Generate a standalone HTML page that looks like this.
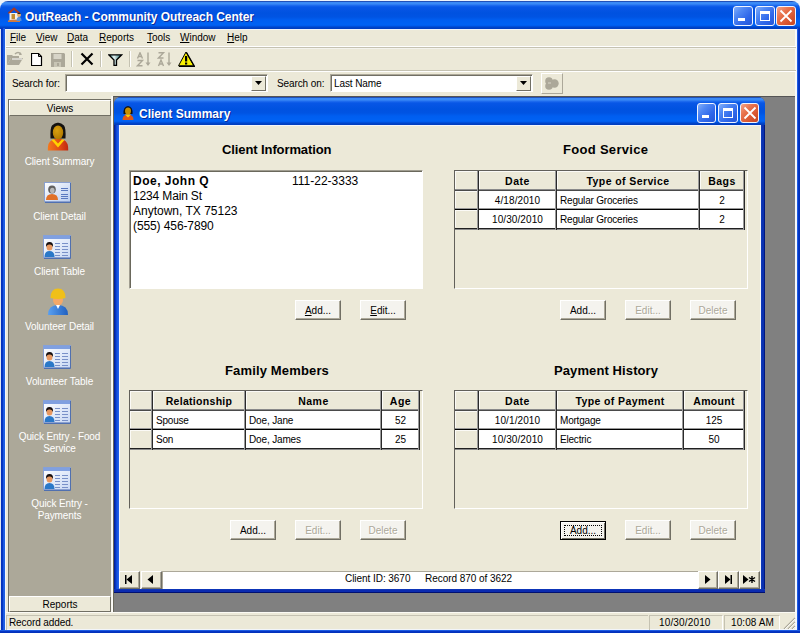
<!DOCTYPE html>
<html><head><meta charset="utf-8">
<style>
*{box-sizing:border-box}
html,body{margin:0;padding:0}
body{width:800px;height:633px;overflow:hidden;position:relative;background:#ece9d8;font-family:"Liberation Sans",sans-serif;font-size:11px;color:#000}
.a{position:absolute}
.t{position:absolute;white-space:pre;line-height:1}
.u{text-decoration:underline}
.xptitle{background:linear-gradient(#2050b8 0px,#2050b8 1px,#3a8af6 1px,#3a8af6 3px,#2370f0 4px,#0856e6 6px,#0052e0 12px,#0054e3 16px,#005ef0 19px,#0062f4 24px,#0058e8 25px,#0046cc 26px,#003cbc 28px)}
.tbtn{position:absolute;top:5px;width:20px;height:20px;border:1px solid #f0f4ff;border-radius:3px;background:linear-gradient(135deg,#82aefa 0%,#5088f4 30%,#3068ea 65%,#2456d8 100%)}
.tbtn.cl{background:linear-gradient(135deg,#f4a488 0%,#e8724c 35%,#d85630 70%,#c44620 100%)}
.btn{position:absolute;width:46px;height:20px;background:#f4f3ee;border:1px solid;border-color:#fff #716f64 #716f64 #fff;box-shadow:inset -1px -1px 0 #aca899;text-align:center;line-height:19px;font-size:10px;letter-spacing:0}
.dis{color:#aca899;text-shadow:1px 1px 0 #fff}
.sunk{position:absolute;border:1px solid;border-color:#aca899 #fff #fff #aca899}
.plbl{position:absolute;left:9px;width:101px;text-align:center;color:#fff;white-space:pre;line-height:12px;font-size:10px;letter-spacing:-0.1px}
.menu{position:absolute;top:32.5px;white-space:pre;line-height:10px;font-size:10px;letter-spacing:0}
</style></head><body>
<div class="a" style="left:0;top:0;width:800px;height:30px;background:#eef3fa"></div>
<div class="a xptitle" style="left:0;top:1px;width:800px;height:28px;border-radius:8px 8px 0 0"></div>
<svg class="a" style="left:7px;top:7px" width="16" height="16" viewBox="0 0 16 16">
<path d="M1.5 6.5L7 1.5L12.5 6.5" fill="none" stroke="#a83a20" stroke-width="2"/>
<rect x="2.5" y="6" width="9" height="8" fill="#f4f0ea"/>
<rect x="4.5" y="7" width="3.5" height="5" fill="#c08a30"/>
<path d="M1 13.5Q7 11.5 13 13.5L13 15L1 15Z" fill="#d07a40"/>
<circle cx="12" cy="8" r="2" fill="#e8b070"/><path d="M10 7Q12 4.5 14 7" fill="#222"/>
<path d="M9.5 14Q9.5 10 12 10Q14.5 10 14.5 14Z" fill="#5a90d8"/>
</svg>
<div class="t" style="left:25px;top:11px;font-weight:bold;font-size:12px;letter-spacing:-0.05px;color:#fff;text-shadow:1px 1px 0 #0a2a9a">OutReach - Community Outreach Center</div>
<div class="tbtn" style="left:733px;top:6px;width:20px"><div class="a" style="left:4px;top:11px;width:7px;height:3px;background:#fff"></div></div>
<div class="tbtn" style="left:755px;top:6px;width:20px"><div class="a" style="left:4px;top:4px;width:10px;height:10px;border:1px solid #fff;border-top-width:3px"></div></div>
<div class="tbtn cl" style="left:776px;top:6px;width:20px"><svg class="a" style="left:0;top:0" width="18" height="18"><path d="M3.5 3.5L14.5 14.5M14.5 3.5L3.5 14.5" stroke="#fff" stroke-width="1.8"/></svg></div>
<div class="a" style="left:0;top:29px;width:1px;height:604px;background:#dfe6f2"></div>
<div class="a" style="left:1px;top:28px;width:4px;height:602px;background:linear-gradient(90deg,#0030b8 0,#0838c8 2px,#1a58e0 2px,#2060e4 4px)"></div>
<div class="a" style="left:5px;top:29px;width:1px;height:601px;background:#f2f5fa"></div>
<div class="a" style="left:797px;top:28px;width:3px;height:605px;background:linear-gradient(90deg,#2060e4 0,#1a58e0 1px,#0838c8 1px,#0030b8 3px)"></div>
<div class="a" style="left:795px;top:29px;width:2px;height:601px;background:#f6f8fb"></div>
<div class="a" style="left:0;top:630px;width:800px;height:3px;background:linear-gradient(#2060e4 0,#1a58e0 1px,#0838c8 1px,#0030b8 3px)"></div>
<div class="a" style="left:5px;top:629px;width:792px;height:1px;background:#f2f5fa"></div>
<div class="a" style="left:5px;top:29px;width:792px;height:1px;background:#f2f5fa"></div>
<div class="menu" style="left:10px"><span class="u">F</span>ile</div>
<div class="menu" style="left:36px"><span class="u">V</span>iew</div>
<div class="menu" style="left:67px"><span class="u">D</span>ata</div>
<div class="menu" style="left:99px"><span class="u">R</span>eports</div>
<div class="menu" style="left:147px"><span class="u">T</span>ools</div>
<div class="menu" style="left:180px"><span class="u">W</span>indow</div>
<div class="menu" style="left:227px"><span class="u">H</span>elp</div>
<div class="a" style="left:6px;top:46px;width:790px;height:1px;background:#fff"></div>
<div class="a" style="left:6px;top:47px;width:790px;height:1px;background:#c5c2b2"></div>
<div class="a" style="left:6px;top:48px;width:790px;height:1px;background:#f4f3ec"></div>
<svg class="a" style="left:6px;top:51px" width="18" height="16" viewBox="0 0 18 16">
<path d="M1 4h5l1 1h6v2H5L1 14Z" fill="#aca899"/><path d="M5 7h12l-4 7H1Z" fill="#aca899"/>
<path d="M9 3Q12 0 15 3" fill="none" stroke="#aca899" stroke-width="1.5"/><path d="M14 1l2 3h-3z" fill="#aca899"/>
<path d="M6 8h10" stroke="#fff" stroke-width="1"/>
</svg>
<svg class="a" style="left:31px;top:53px" width="12" height="13" viewBox="0 0 12 13">
<path d="M0.5 0.5H7.5L10.5 3.5V12.5H0.5Z" fill="#fff" stroke="#000" stroke-width="1.2"/><path d="M7.5 0.5V3.5H10.5" fill="none" stroke="#000"/>
</svg>
<svg class="a" style="left:51px;top:53px" width="14" height="14" viewBox="0 0 14 14">
<path d="M0 0H13L14 1V14H0Z" fill="#aca899"/><rect x="2.5" y="1" width="8" height="5" fill="#d8d5c8"/><rect x="3" y="9" width="7" height="5" fill="#c8c5b5"/><rect x="6" y="10" width="2" height="3" fill="#aca899"/>
</svg>
<div class="a" style="left:71px;top:51px;width:1px;height:16px;background:#c5c2b2;box-shadow:1px 0 0 #fff"></div>
<svg class="a" style="left:80px;top:52px" width="14" height="14" viewBox="0 0 14 14">
<path d="M1.5 1.5L12.5 12.5M12.5 1.5L1.5 12.5" stroke="#000" stroke-width="2.2"/>
</svg>
<div class="a" style="left:100px;top:51px;width:1px;height:16px;background:#c5c2b2;box-shadow:1px 0 0 #fff"></div>
<svg class="a" style="left:108px;top:54px" width="15" height="12" viewBox="0 0 15 12">
<defs><linearGradient id="fg" x1="0" x2="1"><stop offset="0" stop-color="#208080"/><stop offset="0.4" stop-color="#e8f4f4"/><stop offset="1" stop-color="#106060"/></linearGradient></defs>
<path d="M0.8 0.8H13.7L8.5 6V11.3H6V6Z" fill="url(#fg)" stroke="#000" stroke-width="1.3"/>
</svg>
<div class="a" style="left:129px;top:51px;width:1px;height:16px;background:#c5c2b2;box-shadow:1px 0 0 #fff"></div>
<svg class="a" style="left:136px;top:52px" width="16" height="15" viewBox="0 0 16 15">
<g fill="none" stroke="#aca899" stroke-width="1.4"><path d="M1.5 6.5L4 0.8L6.5 6.5M2.5 4.5H5.5"/><path d="M1.5 8.5H6.5L1.5 13.8H6.5"/><path d="M12 0.5V13"/></g>
<path d="M9.5 10.5H14.5L12 14Z" fill="#aca899"/>
</svg>
<svg class="a" style="left:157px;top:52px" width="16" height="15" viewBox="0 0 16 15">
<g fill="none" stroke="#aca899" stroke-width="1.4"><path d="M1.5 0.8H6.5L1.5 6H6.5"/><path d="M1.5 14L4 8L6.5 14M2.5 12H5.5"/><path d="M12 0.5V13"/></g>
<path d="M9.5 10.5H14.5L12 14Z" fill="#aca899"/>
</svg>
<svg class="a" style="left:178px;top:51px" width="17" height="16" viewBox="0 0 17 16">
<path d="M8 1L15.8 14.8H0.5Z" fill="#f8f000" stroke="#000" stroke-width="1"/><path d="M8.5 1.5L16.5 15.5H1" fill="none" stroke="#000" stroke-width="1.3"/>
<rect x="7" y="5" width="2.2" height="5.5" fill="#000"/><rect x="7" y="11.5" width="2.2" height="2" fill="#000"/>
</svg>
<div class="a" style="left:6px;top:70px;width:790px;height:1px;background:#c5c2b2"></div>
<div class="a" style="left:6px;top:71px;width:790px;height:1px;background:#fff"></div>
<div class="t" style="left:12px;top:78.5px;font-size:10px;letter-spacing:-0.1px">Search for:</div>
<div class="a" style="left:65px;top:74px;width:203px;height:18px;background:#fff;border:1px solid;border-color:#aca899 #fff #fff #aca899;box-shadow:inset 1px 1px 0 #716f64"></div>
<div class="a" style="left:251px;top:76px;width:15px;height:15px;background:#ece9d8;border:1px solid;border-color:#fff #716f64 #716f64 #fff"></div>
<svg class="a" style="left:255px;top:81px" width="8" height="5"><path d="M0 0H7L3.5 4Z" fill="#000"/></svg>
<div class="t" style="left:277px;top:78.5px;font-size:10px;letter-spacing:-0.1px">Search on:</div>
<div class="a" style="left:330px;top:74px;width:203px;height:18px;background:#fff;border:1px solid;border-color:#aca899 #fff #fff #aca899;box-shadow:inset 1px 1px 0 #716f64"></div>
<div class="a" style="left:516px;top:76px;width:15px;height:15px;background:#ece9d8;border:1px solid;border-color:#fff #716f64 #716f64 #fff"></div>
<svg class="a" style="left:520px;top:81px" width="8" height="5"><path d="M0 0H7L3.5 4Z" fill="#000"/></svg>
<div class="t" style="left:334px;top:78.5px;font-size:10px;letter-spacing:-0.1px">Last Name</div>
<div class="a" style="left:541px;top:73px;width:22px;height:21px;border:1px solid;border-color:#fff #aca899 #aca899 #fff"></div>
<svg class="a" style="left:544px;top:76px" width="16" height="15" viewBox="0 0 16 15">
<circle cx="5" cy="5" r="3.8" fill="#aca899"/><circle cx="5" cy="10" r="3.8" fill="#aca899"/><circle cx="10.5" cy="7.5" r="4.2" fill="#aca899"/><path d="M4 7h3" stroke="#d8d5c8"/>
</svg>
<div class="a" style="left:113px;top:96px;width:682px;height:516px;background:#808080;border-left:1px solid #6a685c;border-top:1px solid #555"></div>
<div class="a" style="left:111px;top:96px;width:2px;height:517px;background:linear-gradient(90deg,#f4f2ea,#fff)"></div>
<div class="a" style="left:6px;top:612px;width:790px;height:1px;background:#fbfaf4"></div>
<div class="a" style="left:8px;top:99px;width:103px;height:513px;background:#aca899;border-left:1px solid #716f64;border-top:1px solid #716f64"></div>
<div class="a" style="left:9px;top:100px;width:102px;height:16px;background:#ece9d8;border:1px solid;border-color:#fff #716f64 #716f64 #fff"></div>
<div class="t" style="left:9px;top:103.5px;width:102px;text-align:center;font-size:10px">Views</div>
<div class="a" style="left:9px;top:596px;width:102px;height:16px;background:#ece9d8;border:1px solid;border-color:#fff #716f64 #716f64 #fff"></div>
<div class="t" style="left:9px;top:599.5px;width:102px;text-align:center;font-size:10px">Reports</div>
<svg class="a" style="left:47px;top:121px" width="22" height="30" viewBox="0 0 22 30">
<defs><linearGradient id="bodyo" x1="0" x2="1"><stop offset="0" stop-color="#f47a1c"/><stop offset="0.6" stop-color="#e04a14"/><stop offset="1" stop-color="#c02810"/></linearGradient>
<radialGradient id="facew" cx="0.4" cy="0.35" r="0.7"><stop offset="0" stop-color="#d8a010"/><stop offset="1" stop-color="#b07800"/></radialGradient></defs>
<path d="M3.5 17.5Q3 7 5 4.5Q8 1.5 11 1.8Q14 1.5 17 4.5Q19 7 18.5 17.5Z" fill="#141210"/>
<path d="M0.8 29.5Q0.5 21 5 19Q8 17.8 11 17.8Q14 17.8 17 19Q21.5 21 21.2 29.5Z" fill="url(#bodyo)"/>
<ellipse cx="11" cy="11.5" rx="5.2" ry="7" fill="url(#facew)"/>
<path d="M4.5 19L11 26.5L17.5 19L15 18.2L11 22.5L7 18.2Z" fill="#ffd200"/>
</svg><div class="plbl" style="top:155.5px">Client Summary</div>
<svg class="a" style="left:44px;top:182px" width="28" height="21" viewBox="0 0 28 21">
<defs><linearGradient id="cardg" x1="0" y1="0" x2="1" y2="1"><stop offset="0" stop-color="#ffffff"/><stop offset="1" stop-color="#b8ccf0"/></linearGradient></defs>
<rect x="0.5" y="0.5" width="26" height="19" fill="url(#cardg)" stroke="#8aa0d0"/>
<path d="M26.5 1V20.5H1" fill="none" stroke="#5070b0"/>
<ellipse cx="8" cy="7.5" rx="3.8" ry="4" fill="#606060"/><ellipse cx="8.3" cy="8.5" rx="2.3" ry="2.7" fill="#b8b8b8"/>
<path d="M2 18Q2 12 8 12Q14 12 14 18Z" fill="#e07028"/>
<g stroke="#5a78c0" stroke-width="1"><path d="M17 6.5H24M17 8.5H24M17 12.5H24M17 14.5H24M17 16.5H24"/></g>
</svg><div class="plbl" style="top:210.5px">Client Detail</div>
<svg class="a" style="left:43px;top:235px" width="29" height="24" viewBox="0 0 29 24">
<defs><linearGradient id="cardt" x1="0" y1="0" x2="1" y2="1"><stop offset="0" stop-color="#ffffff"/><stop offset="1" stop-color="#c8d8f4"/></linearGradient></defs>
<rect x="0.5" y="0.5" width="27" height="22" fill="url(#cardt)" stroke="#8aa0d0"/>
<rect x="0.5" y="0.5" width="27" height="3.5" fill="#80a0e0"/>
<path d="M27.5 1V23.5H1" fill="none" stroke="#5070b0"/>
<path d="M1.5 22Q1.5 16 6.5 16Q11.5 16 11.5 22Z" fill="#2a78c8"/>
<ellipse cx="6.5" cy="12" rx="3" ry="3.5" fill="#e89860"/>
<path d="M3 12Q2.5 7 6.5 7Q10.5 7 10 12Q9 9 6.5 9.5Q4 9 3 12Z" fill="#181010"/>
<g stroke="#7890c8" stroke-width="1"><path d="M12 8.5H17M12 11.5H17M12 14.5H17M12 17.5H17M12 20.5H17M19 8.5H25M19 11.5H25M19 14.5H25M19 17.5H25M19 20.5H25"/></g>
</svg><div class="plbl" style="top:265.5px">Client Table</div>
<svg class="a" style="left:47px;top:286px" width="22" height="30" viewBox="0 0 22 30">
<defs><linearGradient id="bodyb" x1="0" x2="1"><stop offset="0" stop-color="#5aa0f0"/><stop offset="1" stop-color="#2060c0"/></linearGradient></defs>
<ellipse cx="11" cy="14" rx="5" ry="5.5" fill="#f4a868"/>
<path d="M1 29Q1 19 11 19Q21 19 21 29Z" fill="url(#bodyb)"/>
<path d="M9 19L11 23L13 19Z" fill="#fff"/>
<path d="M3.5 12Q3.5 2.5 11 2.5Q18.5 2.5 18.5 12Q11 14 3.5 12Z" fill="#f0c018"/>
</svg><div class="plbl" style="top:320.5px">Volunteer Detail</div>
<svg class="a" style="left:43px;top:345px" width="29" height="24" viewBox="0 0 29 24">
<defs><linearGradient id="cardt" x1="0" y1="0" x2="1" y2="1"><stop offset="0" stop-color="#ffffff"/><stop offset="1" stop-color="#c8d8f4"/></linearGradient></defs>
<rect x="0.5" y="0.5" width="27" height="22" fill="url(#cardt)" stroke="#8aa0d0"/>
<rect x="0.5" y="0.5" width="27" height="3.5" fill="#80a0e0"/>
<path d="M27.5 1V23.5H1" fill="none" stroke="#5070b0"/>
<path d="M1.5 22Q1.5 16 6.5 16Q11.5 16 11.5 22Z" fill="#2a78c8"/>
<ellipse cx="6.5" cy="12" rx="3" ry="3.5" fill="#e89860"/>
<path d="M3 12Q2.5 7 6.5 7Q10.5 7 10 12Q9 9 6.5 9.5Q4 9 3 12Z" fill="#181010"/>
<g stroke="#7890c8" stroke-width="1"><path d="M12 8.5H17M12 11.5H17M12 14.5H17M12 17.5H17M12 20.5H17M19 8.5H25M19 11.5H25M19 14.5H25M19 17.5H25M19 20.5H25"/></g>
</svg><div class="plbl" style="top:375.5px">Volunteer Table</div>
<svg class="a" style="left:43px;top:400px" width="29" height="24" viewBox="0 0 29 24">
<defs><linearGradient id="cardt" x1="0" y1="0" x2="1" y2="1"><stop offset="0" stop-color="#ffffff"/><stop offset="1" stop-color="#c8d8f4"/></linearGradient></defs>
<rect x="0.5" y="0.5" width="27" height="22" fill="url(#cardt)" stroke="#8aa0d0"/>
<rect x="0.5" y="0.5" width="27" height="3.5" fill="#80a0e0"/>
<path d="M27.5 1V23.5H1" fill="none" stroke="#5070b0"/>
<path d="M1.5 22Q1.5 16 6.5 16Q11.5 16 11.5 22Z" fill="#2a78c8"/>
<ellipse cx="6.5" cy="12" rx="3" ry="3.5" fill="#e89860"/>
<path d="M3 12Q2.5 7 6.5 7Q10.5 7 10 12Q9 9 6.5 9.5Q4 9 3 12Z" fill="#181010"/>
<g stroke="#7890c8" stroke-width="1"><path d="M12 8.5H17M12 11.5H17M12 14.5H17M12 17.5H17M12 20.5H17M19 8.5H25M19 11.5H25M19 14.5H25M19 17.5H25M19 20.5H25"/></g>
</svg><div class="plbl" style="top:430.5px">Quick Entry - Food
Service</div>
<svg class="a" style="left:43px;top:467px" width="29" height="24" viewBox="0 0 29 24">
<defs><linearGradient id="cardt" x1="0" y1="0" x2="1" y2="1"><stop offset="0" stop-color="#ffffff"/><stop offset="1" stop-color="#c8d8f4"/></linearGradient></defs>
<rect x="0.5" y="0.5" width="27" height="22" fill="url(#cardt)" stroke="#8aa0d0"/>
<rect x="0.5" y="0.5" width="27" height="3.5" fill="#80a0e0"/>
<path d="M27.5 1V23.5H1" fill="none" stroke="#5070b0"/>
<path d="M1.5 22Q1.5 16 6.5 16Q11.5 16 11.5 22Z" fill="#2a78c8"/>
<ellipse cx="6.5" cy="12" rx="3" ry="3.5" fill="#e89860"/>
<path d="M3 12Q2.5 7 6.5 7Q10.5 7 10 12Q9 9 6.5 9.5Q4 9 3 12Z" fill="#181010"/>
<g stroke="#7890c8" stroke-width="1"><path d="M12 8.5H17M12 11.5H17M12 14.5H17M12 17.5H17M12 20.5H17M19 8.5H25M19 11.5H25M19 14.5H25M19 17.5H25M19 20.5H25"/></g>
</svg><div class="plbl" style="top:497.5px">Quick Entry -
Payments</div>
<div class="a" style="left:6px;top:615px;width:642px;height:15px;border-top:1px solid #c5c2b2;border-left:1px solid #c5c2b2"></div>
<div class="t" style="left:9px;top:618px;font-size:10px;letter-spacing:-0.1px">Record added.</div>
<div class="a" style="left:649px;top:615px;width:74px;height:15px;border-top:1px solid #c5c2b2;border-left:1px solid #c5c2b2;border-right:1px solid #fff"></div>
<div class="t" style="left:659px;top:618px;font-size:10px;letter-spacing:0.15px">10/30/2010</div>
<div class="a" style="left:724px;top:615px;width:56px;height:15px;border-top:1px solid #c5c2b2;border-left:1px solid #c5c2b2;border-right:1px solid #fff"></div>
<div class="t" style="left:731px;top:618px;font-size:10px;letter-spacing:0.1px">10:08 AM</div>
<svg class="a" style="left:783px;top:617px" width="13" height="12"><path d="M12 1L1 12M12 5L5 12M12 9L9 12" stroke="#aca899" stroke-width="1.2"/><path d="M12 2L2 12M12 6L6 12M12 10L10 12" stroke="#fff" stroke-width="0.8"/></svg>
<div class="a" style="left:114px;top:97px;width:651px;height:496px;background:#0a48d8;border-radius:7px 7px 0 0;overflow:hidden"></div>
<div class="a xptitle" style="left:114px;top:97px;width:651px;height:28px;border-radius:7px 7px 0 0"></div>
<div class="a" style="left:114px;top:125px;width:5px;height:468px;background:linear-gradient(90deg,#001e90 0,#0828a8 1px,#0a40d0 2px,#1452e0 3px,#2a64ec 5px);"></div>
<div class="a" style="left:761px;top:125px;width:4px;height:468px;background:linear-gradient(90deg,#1040c0 0,#0a30b0 1px,#0a30b0 3px,#001880 3px);"></div>
<div class="a" style="left:114px;top:589px;width:651px;height:4px;background:linear-gradient(#1040c0 0,#0a2ab0 1px,#0a2ab0 3px,#001070 3px);"></div>
<div class="a" style="left:119px;top:125px;width:642px;height:464px;background:#f2f5fb;"></div>
<div class="a" style="left:120px;top:126px;width:640px;height:462px;background:#ece9d8;"></div>
<svg class="a" style="left:122px;top:105px" width="12" height="16" viewBox="0 0 12 16">
<path d="M1.5 9Q1 1.5 6 1Q11 1.5 10.5 9Z" fill="#111"/><ellipse cx="6" cy="6" rx="3" ry="3.5" fill="#c89000"/>
<path d="M0.5 15Q0.5 9.5 6 9.5Q11.5 9.5 11.5 15Z" fill="#e05818"/><path d="M3 9.5L6 12.5L9 9.5Z" fill="#ffd000"/>
</svg>
<div class="t" style="left:139px;top:108px;font-weight:bold;font-size:12px;color:#fff;text-shadow:1px 1px 0 #0a2a9a">Client Summary</div>
<div class="tbtn" style="left:697px;top:103px;width:19px"><div class="a" style="left:4px;top:11px;width:7px;height:3px;background:#fff"></div></div>
<div class="tbtn" style="left:718px;top:103px;width:20px"><div class="a" style="left:4px;top:4px;width:10px;height:10px;border:1px solid #fff;border-top-width:3px"></div></div>
<div class="tbtn cl" style="left:740px;top:103px;width:19px"><svg class="a" style="left:0;top:0" width="18" height="18"><path d="M3.5 3.5L14.5 14.5M14.5 3.5L3.5 14.5" stroke="#fff" stroke-width="1.8"/></svg></div>
<div class="t" style="left:222px;top:143px;font-size:13px;font-weight:bold;letter-spacing:-0.1px">Client Information</div>
<div class="t" style="left:563px;top:143px;font-size:13px;font-weight:bold;letter-spacing:0.3px">Food Service</div>
<div class="t" style="left:225px;top:364px;font-size:13px;font-weight:bold;letter-spacing:0.15px">Family Members</div>
<div class="t" style="left:554px;top:364px;font-size:13px;font-weight:bold;letter-spacing:0.1px">Payment History</div>
<div class="a" style="left:129px;top:170px;width:294px;height:119px;background:#fff;border:1px solid;border-color:#a09d90 #fff #fff #a09d90;box-shadow:inset 1px 1px 0 #6a685c"></div>
<div class="t" style="left:133px;top:175px;font-size:12px;font-weight:bold;letter-spacing:0.5px">Doe, John Q</div>
<div class="t" style="left:292px;top:175px;font-size:12px">111-22-3333</div>
<div class="t" style="left:133px;top:190px;font-size:12px;letter-spacing:-0.15px">1234 Main St</div>
<div class="t" style="left:133px;top:205px;font-size:12px">Anytown, TX 75123</div>
<div class="t" style="left:133px;top:220px;font-size:12px;letter-spacing:-0.1px">(555) 456-7890</div>
<div class="a" style="left:454px;top:170px;width:294px;height:119px;background:#ece9d8;border:1px solid;border-color:#62605a #fff #fff #62605a"></div>
<div class="a" style="left:479px;top:191px;width:265px;height:18px;background:#fff;"></div>
<div class="a" style="left:479px;top:210px;width:265px;height:18px;background:#fff;"></div>
<div class="a" style="left:455px;top:171px;width:22px;height:18px;background:transparent;border-top:1px solid #fbfaf6;border-left:1px solid #fbfaf6"></div>
<div class="a" style="left:479px;top:171px;width:76px;height:18px;background:transparent;border-top:1px solid #fbfaf6;border-left:1px solid #fbfaf6"></div>
<div class="a" style="left:557px;top:171px;width:141px;height:18px;background:transparent;border-top:1px solid #fbfaf6;border-left:1px solid #fbfaf6"></div>
<div class="a" style="left:700px;top:171px;width:43px;height:18px;background:transparent;border-top:1px solid #fbfaf6;border-left:1px solid #fbfaf6"></div>
<div class="a" style="left:455px;top:191px;width:22px;height:17px;background:transparent;border-top:1px solid #fbfaf6;border-left:1px solid #fbfaf6"></div>
<div class="a" style="left:455px;top:210px;width:22px;height:17px;background:transparent;border-top:1px solid #fbfaf6;border-left:1px solid #fbfaf6"></div>
<div class="a" style="left:455px;top:189px;width:290px;height:1px;background:#8a8a8a;"></div>
<div class="a" style="left:455px;top:190px;width:290px;height:1px;background:#4a4a4a;"></div>
<div class="a" style="left:455px;top:208px;width:290px;height:1px;background:#9a9a9a;"></div>
<div class="a" style="left:455px;top:209px;width:290px;height:1px;background:#000;"></div>
<div class="a" style="left:455px;top:228px;width:290px;height:1px;background:#202020;"></div>
<div class="a" style="left:455px;top:229px;width:290px;height:1px;background:#8a8a8a;"></div>
<div class="a" style="left:477px;top:171px;width:1px;height:59px;background:#9a9a9a;"></div>
<div class="a" style="left:478px;top:171px;width:1px;height:59px;background:#2a2a2a;"></div>
<div class="a" style="left:555px;top:171px;width:1px;height:59px;background:#9a9a9a;"></div>
<div class="a" style="left:556px;top:171px;width:1px;height:59px;background:#2a2a2a;"></div>
<div class="a" style="left:698px;top:171px;width:1px;height:59px;background:#9a9a9a;"></div>
<div class="a" style="left:699px;top:171px;width:1px;height:59px;background:#2a2a2a;"></div>
<div class="a" style="left:743px;top:171px;width:1px;height:59px;background:#9a9a9a;"></div>
<div class="a" style="left:744px;top:171px;width:1px;height:59px;background:#2a2a2a;"></div>
<div class="t" style="left:479px;top:175.5px;width:77px;text-align:center;font-size:10.5px;font-weight:bold;letter-spacing:0.5px">Date</div>
<div class="t" style="left:557px;top:175.5px;width:142px;text-align:center;font-size:10.5px;font-weight:bold;letter-spacing:0.4px">Type of Service</div>
<div class="t" style="left:700px;top:175.5px;width:44px;text-align:center;font-size:10.5px;font-weight:bold;letter-spacing:0.5px">Bags</div>
<div class="t" style="left:479px;top:195.5px;width:77px;text-align:center;font-size:10px;letter-spacing:0.1px">4/18/2010</div>
<div class="t" style="left:560px;top:195.5px;font-size:10px;letter-spacing:-0.2px">Regular Groceries</div>
<div class="t" style="left:700px;top:195.5px;width:44px;text-align:center;font-size:10px;letter-spacing:0px">2</div>
<div class="t" style="left:479px;top:215.0px;width:77px;text-align:center;font-size:10px;letter-spacing:0.1px">10/30/2010</div>
<div class="t" style="left:560px;top:215.0px;font-size:10px;letter-spacing:-0.2px">Regular Groceries</div>
<div class="t" style="left:700px;top:215.0px;width:44px;text-align:center;font-size:10px;letter-spacing:0px">2</div>
<div class="a" style="left:129px;top:390px;width:294px;height:119px;background:#ece9d8;border:1px solid;border-color:#62605a #fff #fff #62605a"></div>
<div class="a" style="left:153px;top:411px;width:266px;height:18px;background:#fff;"></div>
<div class="a" style="left:153px;top:430px;width:266px;height:18px;background:#fff;"></div>
<div class="a" style="left:130px;top:391px;width:21px;height:18px;background:transparent;border-top:1px solid #fbfaf6;border-left:1px solid #fbfaf6"></div>
<div class="a" style="left:153px;top:391px;width:91px;height:18px;background:transparent;border-top:1px solid #fbfaf6;border-left:1px solid #fbfaf6"></div>
<div class="a" style="left:246px;top:391px;width:134px;height:18px;background:transparent;border-top:1px solid #fbfaf6;border-left:1px solid #fbfaf6"></div>
<div class="a" style="left:382px;top:391px;width:36px;height:18px;background:transparent;border-top:1px solid #fbfaf6;border-left:1px solid #fbfaf6"></div>
<div class="a" style="left:130px;top:411px;width:21px;height:17px;background:transparent;border-top:1px solid #fbfaf6;border-left:1px solid #fbfaf6"></div>
<div class="a" style="left:130px;top:430px;width:21px;height:17px;background:transparent;border-top:1px solid #fbfaf6;border-left:1px solid #fbfaf6"></div>
<div class="a" style="left:130px;top:409px;width:290px;height:1px;background:#8a8a8a;"></div>
<div class="a" style="left:130px;top:410px;width:290px;height:1px;background:#4a4a4a;"></div>
<div class="a" style="left:130px;top:428px;width:290px;height:1px;background:#9a9a9a;"></div>
<div class="a" style="left:130px;top:429px;width:290px;height:1px;background:#000;"></div>
<div class="a" style="left:130px;top:448px;width:290px;height:1px;background:#202020;"></div>
<div class="a" style="left:130px;top:449px;width:290px;height:1px;background:#8a8a8a;"></div>
<div class="a" style="left:151px;top:391px;width:1px;height:59px;background:#9a9a9a;"></div>
<div class="a" style="left:152px;top:391px;width:1px;height:59px;background:#2a2a2a;"></div>
<div class="a" style="left:244px;top:391px;width:1px;height:59px;background:#9a9a9a;"></div>
<div class="a" style="left:245px;top:391px;width:1px;height:59px;background:#2a2a2a;"></div>
<div class="a" style="left:380px;top:391px;width:1px;height:59px;background:#9a9a9a;"></div>
<div class="a" style="left:381px;top:391px;width:1px;height:59px;background:#2a2a2a;"></div>
<div class="a" style="left:418px;top:391px;width:1px;height:59px;background:#9a9a9a;"></div>
<div class="a" style="left:419px;top:391px;width:1px;height:59px;background:#2a2a2a;"></div>
<div class="t" style="left:153px;top:395.5px;width:92px;text-align:center;font-size:10.5px;font-weight:bold;letter-spacing:0.3px">Relationship</div>
<div class="t" style="left:246px;top:395.5px;width:135px;text-align:center;font-size:10.5px;font-weight:bold;letter-spacing:0.5px">Name</div>
<div class="t" style="left:382px;top:395.5px;width:37px;text-align:center;font-size:10.5px;font-weight:bold;letter-spacing:0.5px">Age</div>
<div class="t" style="left:156px;top:415.5px;font-size:10px;letter-spacing:-0.2px">Spouse</div>
<div class="t" style="left:249px;top:415.5px;font-size:10px;letter-spacing:-0.15px">Doe, Jane</div>
<div class="t" style="left:382px;top:415.5px;width:37px;text-align:center;font-size:10px;letter-spacing:0px">52</div>
<div class="t" style="left:156px;top:435.0px;font-size:10px;letter-spacing:-0.2px">Son</div>
<div class="t" style="left:249px;top:435.0px;font-size:10px;letter-spacing:-0.15px">Doe, James</div>
<div class="t" style="left:382px;top:435.0px;width:37px;text-align:center;font-size:10px;letter-spacing:0px">25</div>
<div class="a" style="left:454px;top:390px;width:294px;height:119px;background:#ece9d8;border:1px solid;border-color:#62605a #fff #fff #62605a"></div>
<div class="a" style="left:479px;top:411px;width:265px;height:18px;background:#fff;"></div>
<div class="a" style="left:479px;top:430px;width:265px;height:18px;background:#fff;"></div>
<div class="a" style="left:455px;top:391px;width:22px;height:18px;background:transparent;border-top:1px solid #fbfaf6;border-left:1px solid #fbfaf6"></div>
<div class="a" style="left:479px;top:391px;width:76px;height:18px;background:transparent;border-top:1px solid #fbfaf6;border-left:1px solid #fbfaf6"></div>
<div class="a" style="left:557px;top:391px;width:125px;height:18px;background:transparent;border-top:1px solid #fbfaf6;border-left:1px solid #fbfaf6"></div>
<div class="a" style="left:684px;top:391px;width:59px;height:18px;background:transparent;border-top:1px solid #fbfaf6;border-left:1px solid #fbfaf6"></div>
<div class="a" style="left:455px;top:411px;width:22px;height:17px;background:transparent;border-top:1px solid #fbfaf6;border-left:1px solid #fbfaf6"></div>
<div class="a" style="left:455px;top:430px;width:22px;height:17px;background:transparent;border-top:1px solid #fbfaf6;border-left:1px solid #fbfaf6"></div>
<div class="a" style="left:455px;top:409px;width:290px;height:1px;background:#8a8a8a;"></div>
<div class="a" style="left:455px;top:410px;width:290px;height:1px;background:#4a4a4a;"></div>
<div class="a" style="left:455px;top:428px;width:290px;height:1px;background:#9a9a9a;"></div>
<div class="a" style="left:455px;top:429px;width:290px;height:1px;background:#000;"></div>
<div class="a" style="left:455px;top:448px;width:290px;height:1px;background:#202020;"></div>
<div class="a" style="left:455px;top:449px;width:290px;height:1px;background:#8a8a8a;"></div>
<div class="a" style="left:477px;top:391px;width:1px;height:59px;background:#9a9a9a;"></div>
<div class="a" style="left:478px;top:391px;width:1px;height:59px;background:#2a2a2a;"></div>
<div class="a" style="left:555px;top:391px;width:1px;height:59px;background:#9a9a9a;"></div>
<div class="a" style="left:556px;top:391px;width:1px;height:59px;background:#2a2a2a;"></div>
<div class="a" style="left:682px;top:391px;width:1px;height:59px;background:#9a9a9a;"></div>
<div class="a" style="left:683px;top:391px;width:1px;height:59px;background:#2a2a2a;"></div>
<div class="a" style="left:743px;top:391px;width:1px;height:59px;background:#9a9a9a;"></div>
<div class="a" style="left:744px;top:391px;width:1px;height:59px;background:#2a2a2a;"></div>
<div class="t" style="left:479px;top:395.5px;width:77px;text-align:center;font-size:10.5px;font-weight:bold;letter-spacing:0.5px">Date</div>
<div class="t" style="left:557px;top:395.5px;width:126px;text-align:center;font-size:10.5px;font-weight:bold;letter-spacing:0.4px">Type of Payment</div>
<div class="t" style="left:684px;top:395.5px;width:60px;text-align:center;font-size:10.5px;font-weight:bold;letter-spacing:0.3px">Amount</div>
<div class="t" style="left:479px;top:415.5px;width:77px;text-align:center;font-size:10px;letter-spacing:0.1px">10/1/2010</div>
<div class="t" style="left:560px;top:415.5px;font-size:10px;letter-spacing:-0.2px">Mortgage</div>
<div class="t" style="left:684px;top:415.5px;width:60px;text-align:center;font-size:10px;letter-spacing:0px">125</div>
<div class="t" style="left:479px;top:435.0px;width:77px;text-align:center;font-size:10px;letter-spacing:0.1px">10/30/2010</div>
<div class="t" style="left:560px;top:435.0px;font-size:10px;letter-spacing:-0.2px">Electric</div>
<div class="t" style="left:684px;top:435.0px;width:60px;text-align:center;font-size:10px;letter-spacing:0px">50</div>
<div class="btn" style="left:295px;top:300px"><span style="text-decoration:underline">A</span>dd...</div>
<div class="btn" style="left:360px;top:300px"><span style="text-decoration:underline">E</span>dit...</div>
<div class="btn" style="left:560px;top:300px">Add...</div>
<div class="btn" style="left:625px;top:300px"><span class="dis">Edit...</span></div>
<div class="btn" style="left:690px;top:300px"><span class="dis">Delete</span></div>
<div class="btn" style="left:230px;top:520px">Add...</div>
<div class="btn" style="left:295px;top:520px"><span class="dis">Edit...</span></div>
<div class="btn" style="left:360px;top:520px"><span class="dis">Delete</span></div>
<div class="btn" style="left:560px;top:521px;height:19px;border:1px solid #000;box-shadow:inset 1px 1px 0 #fff,inset -1px -1px 0 #716f64;line-height:18px">Add...</div>
<div class="a" style="left:564px;top:525px;width:38px;height:11px;border:1px dotted #000"></div>
<div class="btn" style="left:625px;top:520px"><span class="dis">Edit...</span></div>
<div class="btn" style="left:690px;top:520px"><span class="dis">Delete</span></div>
<div class="a" style="left:119px;top:571px;width:21px;height:18px;background:#ece9d8;border:1px solid;border-color:#fff #716f64 #716f64 #fff;box-shadow:inset -1px -1px 0 #aca899"></div>
<svg class="a" style="left:119px;top:571px" width="21" height="18"><rect x="6" y="4" width="1.5" height="9" fill="#000"/><path d="M13 4V13L7.5 8.5Z" fill="#000"/></svg>
<div class="a" style="left:141px;top:571px;width:21px;height:18px;background:#ece9d8;border:1px solid;border-color:#fff #716f64 #716f64 #fff;box-shadow:inset -1px -1px 0 #aca899"></div>
<svg class="a" style="left:141px;top:571px" width="21" height="18"><path d="M12 4V13L6.5 8.5Z" fill="#000"/></svg>
<div class="a" style="left:162px;top:571px;width:536px;height:18px;background:#fff;border-top:1px solid #aca899;border-left:1px solid #aca899"></div>
<div class="t" style="left:345px;top:573.5px;font-size:10px;letter-spacing:-0.05px">Client ID: 3670</div>
<div class="t" style="left:425px;top:573.5px;font-size:10px;letter-spacing:-0.05px">Record 870 of 3622</div>
<div class="a" style="left:698px;top:571px;width:20px;height:18px;background:#ece9d8;border:1px solid;border-color:#fff #716f64 #716f64 #fff;box-shadow:inset -1px -1px 0 #aca899"></div>
<svg class="a" style="left:698px;top:571px" width="20" height="18"><path d="M7 4V13L12.5 8.5Z" fill="#000"/></svg>
<div class="a" style="left:718px;top:571px;width:21px;height:18px;background:#ece9d8;border:1px solid;border-color:#fff #716f64 #716f64 #fff;box-shadow:inset -1px -1px 0 #aca899"></div>
<svg class="a" style="left:718px;top:571px" width="21" height="18"><path d="M7 4V13L12.5 8.5Z" fill="#000"/><rect x="12.5" y="4" width="1.5" height="9" fill="#000"/></svg>
<div class="a" style="left:739px;top:571px;width:21px;height:18px;background:#ece9d8;border:1px solid;border-color:#fff #716f64 #716f64 #fff;box-shadow:inset -1px -1px 0 #aca899"></div>
<svg class="a" style="left:739px;top:571px" width="21" height="18"><path d="M4 4V13L9.5 8.5Z" fill="#000"/><path d="M13 5V12M10 6.5L16 10.5M16 6.5L10 10.5" stroke="#000" stroke-width="1.4"/></svg>
</body></html>
